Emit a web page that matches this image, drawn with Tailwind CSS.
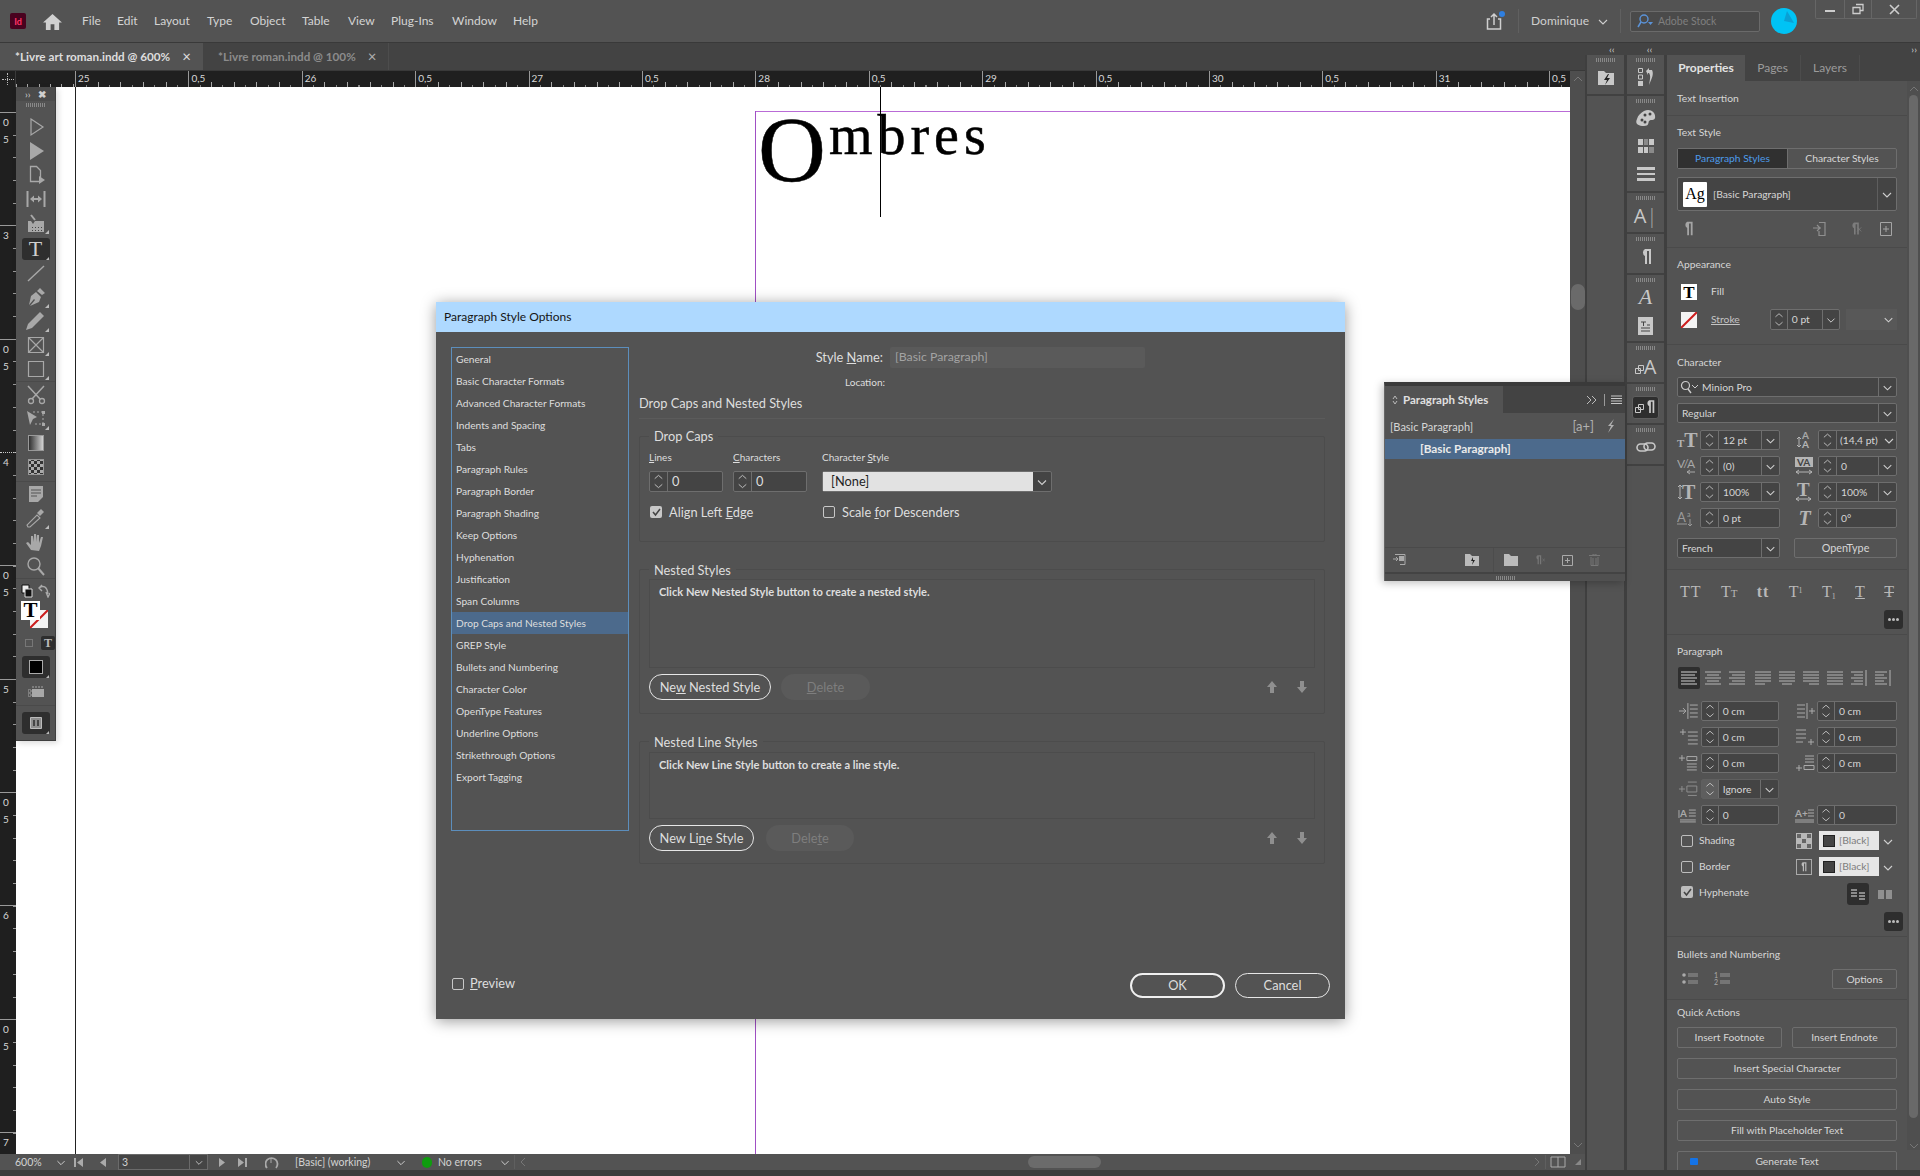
<!doctype html>
<html lang="en"><head><meta charset="utf-8"><title>InDesign</title>
<script src="https://cdn.jsdelivr.net/npm/@tailwindcss/browser@4"></script></head>
<body class="m-0 bg-[#535353]">
<svg class="absolute w-0 h-0"><defs>
<linearGradient id="gr"><stop offset="0" stop-color="#2a2a2a"/><stop offset="1" stop-color="#d8d8d8"/></linearGradient>
<pattern id="ck" width="6" height="6" patternUnits="userSpaceOnUse"><rect width="6" height="6" fill="#aaa"/><rect width="3" height="3" fill="#333"/><rect x="3" y="3" width="3" height="3" fill="#333"/></pattern>
<g id="fly"><path d="M27 23h-4l4-4z" fill="#bbb"/></g>
<g id="t-sel"><path d="M9 4L21 12 9 20Z" fill="none" stroke="currentColor" stroke-width="1.2"/></g>
<g id="t-dir"><path d="M8 3L22 12 8 21Z" fill="currentColor"/></g>
<g id="t-page"><path d="M8.500 3.500h6l4 4v11h-10z" fill="none" stroke="currentColor" stroke-width="1.300"/><path d="M17 13l6 4-6 4z" fill="currentColor"/></g>
<g id="t-gap"><path d="M5.500 4v16M22.500 4v16" stroke="currentColor" stroke-width="2"/><path d="M8 12l4-3.500v2.500h4V8.500l4 3.500-4 3.500V13h-4v2.500z" fill="currentColor"/></g>
<g id="t-col"><path d="M6 10h3l2 3 2-3h9v11H6z" fill="currentColor"/><path d="M9 4l4 5" stroke="currentColor" stroke-width="2"/><path d="M10 16h1v1h-1zm3 0h1v1h-1zm3 0h1v1h-1zm-6 3h1v1h-1zm3 0h1v1h-1zm3 0h1v1h-1zm3-3h1v1h-1zm0 3h1v1h-1z" fill="#444"/></g>
<g id="t-line"><path d="M6 20L22 5" stroke="currentColor" stroke-width="1.400"/></g>
<g id="t-pen"><path d="M18 3l5 5-3 2-5-4zM14 7l5 5-2 5-9 4 5-6-1-1-5 6 2-9z" fill="currentColor"/></g>
<g id="t-pcl"><path d="M18 3l4 4-12 12-6 2 2-6z" fill="currentColor"/></g>
<g id="t-frm"><path d="M6.500 4.500h15v15h-15zM6.500 4.500l15 15M21.500 4.500l-15 15" fill="none" stroke="currentColor" stroke-width="1.200"/></g>
<g id="t-rct"><path d="M6.500 4.500h15v15h-15z" fill="none" stroke="currentColor" stroke-width="1.200"/></g>
<g id="t-sci"><circle cx="9" cy="19" r="2.500" fill="none" stroke="currentColor" stroke-width="1.300"/><circle cx="20" cy="19" r="2.500" fill="none" stroke="currentColor" stroke-width="1.300"/><path d="M6 4l12 13M22 4L10 17" stroke="currentColor" stroke-width="1.500"/></g>
<g id="t-fre"><path d="M5 4l10 6-4 2-3 6z" fill="currentColor"/><path d="M11 5h10v12H13" fill="none" stroke="currentColor" stroke-dasharray="2 2"/><path d="M20 4h3v3h-3zM20 16h3v3h-3z" fill="currentColor"/></g>
<g id="t-gra"><rect x="6.500" y="4.500" width="15" height="15" fill="url(#gr)" stroke="#999"/></g>
<g id="t-fea"><rect x="6.500" y="4.500" width="15" height="15" fill="url(#ck)" stroke="#999"/></g>
<g id="t-not"><path d="M7 4h14v11l-5 5H7z" fill="currentColor"/><path d="M9 8h10M9 11h10M9 14h6" stroke="#555" stroke-width="1.200"/></g>
<g id="t-eye"><path d="M6 21l-1-2 10-10 3 3L8 21z" fill="none" stroke="currentColor" stroke-width="1.100"/><path d="M15 7l4-4 3 3-4 4z" fill="currentColor"/></g>
<g id="t-hnd"><path d="M9 20l-5-7 2-1 3 3V6l2 0 1 6V4h2l1 8V5h2l0 8 2-6h2l-2 9-2 5z" fill="currentColor"/></g>
<g id="t-zom"><circle cx="12" cy="10" r="6" fill="none" stroke="currentColor" stroke-width="1.400"/><path d="M16 14l6 7" stroke="currentColor" stroke-width="2"/></g>
<path id="spin" d="M5 7l4-3.500L13 7M5 13l4 3.500 4-3.500" fill="none" stroke="#c4c4c4"/>
<path id="chev" d="M5 8l4 4 4-4" fill="none" stroke="#cfcfcf" stroke-width="1.100"/>
<g id="up"><path d="M6 1L1 7h3v6h4V7h3z" fill="#8f8f8f"/></g>
<g id="down"><path d="M6 13L1 7h3V1h4v6h3z" fill="#8f8f8f"/></g>
<g id="pil"><path d="M8 2h8v15h-2V4h-2v13h-2V9a4 4 0 010-7z" fill="currentColor"/></g>
</defs></svg>

<div class="relative w-[1920px] h-[1176px] overflow-hidden flex flex-col bg-[#535353] text-[#d6d6d6] text-[11px] leading-none font-[Lato,sans-serif]">

<!-- top bar -->
<header class="h-[43px] shrink-0 flex items-center bg-[#535353] border-b border-[#393939]">
  <div class="ml-[10px] w-[16px] h-[16px] rounded-[2px] bg-[#49021f] text-[#ff3366] text-[9px] font-bold flex items-center justify-center">Id</div>
  <svg class="ml-[17px] w-[19px] h-[17px] text-[#d0d0d0]" viewBox="0 0 20 18"><path d="M10 1l10 9h-3v8h-5v-6H8v6H3v-8H0z" fill="currentColor"/></svg>
  <nav class="ml-[20px] flex text-[12px] text-[#d4d4d4]">
    <span class="w-[35px]">File</span><span class="w-[37px]">Edit</span><span class="w-[53px]">Layout</span><span class="w-[43px]">Type</span><span class="w-[52px]">Object</span><span class="w-[46px]">Table</span><span class="w-[43px]">View</span><span class="w-[61px]">Plug-Ins</span><span class="w-[61px]">Window</span><span>Help</span>
  </nav>
  <div class="ml-auto flex items-center h-full relative">
    <svg class="w-[20px] h-[20px] text-[#cfcfcf]" viewBox="0 0 20 20"><path d="M5 8H2.500v10h13V8H13M9 14V3M6 6l3-3 3 3" fill="none" stroke="currentColor" stroke-width="1.500"/><circle cx="17" cy="3" r="3" fill="#2f7fe0"/></svg>
    <span class="ml-[13px] w-px h-[24px] bg-[#606060]"></span>
    <span class="ml-[12px] text-[12px] text-[#cfcfcf]">Dominique</span>
    <svg class="ml-[5px] w-[18px] h-[18px]" viewBox="0 0 18 18"><use href="#chev"/></svg>
    <span class="ml-[8px] w-px h-[24px] bg-[#606060]"></span>
    <div class="ml-[9px] w-[130px] h-[21px] border border-[#6a6a6a] rounded-[2px] bg-[#4a4a4a] flex items-center pl-[5px] text-[#7f7f7f] text-[10.500px]">
      <svg class="w-[18px] h-[14px] mr-[4px]" viewBox="0 0 18 14"><circle cx="8" cy="5" r="4" fill="none" stroke="#5b93d8" stroke-width="1.400"/><path d="M5 8l-3 5" stroke="#5b93d8" stroke-width="1.500"/><path d="M12 8h5l-2.500 3z" fill="#5b93d8"/></svg>Adobe Stock
    </div>
    <svg class="ml-[11px] w-[26px] h-[26px]" viewBox="0 0 26 26"><circle cx="13" cy="13" r="13" fill="#00c3f5"/><path d="M13 13l3-10 7 12z" fill="#0aa0d4"/></svg>
    <div class="ml-[18px] mr-[3px] self-start w-[102px] h-[19px] border border-t-0 border-[#666] rounded-b-[2px] flex items-center text-[#cdcdcd]">
      <span class="w-[28px] flex justify-center"><span class="block w-[10px] h-[2px] mt-[4px] bg-[#cdcdcd]"></span></span>
      <span class="w-[28px] h-full border-x border-[#666] flex justify-center items-center"><svg class="w-[12px] h-[12px]" viewBox="0 0 12 12"><path d="M4 1.500h7v6H8.500M1 4.500h7v6H1z" fill="none" stroke="currentColor" stroke-width="1.300"/></svg></span>
      <span class="flex-1 flex justify-center"><svg class="w-[11px] h-[11px]" viewBox="0 0 11 11"><path d="M1 1l9 9M10 1l-9 9" stroke="currentColor" stroke-width="1.600"/></svg></span>
    </div>
  </div>
</header>

<div class="h-[1127px] flex shrink-0">
  <!-- left document region -->
  <div class="w-[1585px] shrink-0 flex flex-col">
    <div class="h-[28px] shrink-0 flex bg-[#434343] border-b border-[#393939]">
      <div class="w-[203px] bg-[#535353] flex items-center pl-[15px] font-bold text-[#dedede] text-[11.700px] whitespace-nowrap">*Livre art roman.indd @ 600%<span class="ml-[12px] text-[15px] font-normal">×</span></div>
      <div class="w-[186px] border-r border-[#4d4d4d] flex items-center pl-[15px] font-bold text-[#8c8c8c] text-[11.700px] whitespace-nowrap">*Livre roman.indd @ 100%<span class="ml-[12px] text-[15px] font-normal text-[#b0b0b0]">×</span></div>
    </div>
    <div class="flex-1 flex min-h-0">
      <div class="w-[1570px] flex flex-col">
        <!-- horizontal ruler -->
        <div class="h-[16px] shrink-0 flex bg-[#1f1f1f] text-[#d8d8d8] text-[10px]">
          <div class="w-[16px] border-r border-[#3a3a3a] relative flex items-center justify-center"><span class="block w-[12px] border-t border-dotted border-[#bbb]"></span><span class="absolute left-[7px] top-[2px] h-[12px] border-l border-dotted border-[#bbb]"></span></div>
          <div class="w-[59px] [background:repeating-linear-gradient(90deg,#aaa_0_1px,transparent_1px_11.340px)_bottom/100%_3px_no-repeat]"></div>
          <div class="flex-1 flex overflow-hidden [background:repeating-linear-gradient(90deg,#aaa_0_1px,transparent_1px_22.680px)_bottom/100%_5px_no-repeat,repeating-linear-gradient(90deg,#888_0_1px,transparent_1px_11.340px)_bottom/100%_2px_no-repeat]">
            <span class="w-[113.400px] shrink-0 border-l border-[#999] pl-[2px] pt-[2px]">25</span><span class="w-[113.400px] shrink-0 border-l border-[#999] pl-[2px] pt-[2px]">0,5</span><span class="w-[113.400px] shrink-0 border-l border-[#999] pl-[2px] pt-[2px]">26</span><span class="w-[113.400px] shrink-0 border-l border-[#999] pl-[2px] pt-[2px]">0,5</span><span class="w-[113.400px] shrink-0 border-l border-[#999] pl-[2px] pt-[2px]">27</span><span class="w-[113.400px] shrink-0 border-l border-[#999] pl-[2px] pt-[2px]">0,5</span><span class="w-[113.400px] shrink-0 border-l border-[#999] pl-[2px] pt-[2px]">28</span><span class="w-[113.400px] shrink-0 border-l border-[#999] pl-[2px] pt-[2px]">0,5</span><span class="w-[113.400px] shrink-0 border-l border-[#999] pl-[2px] pt-[2px]">29</span><span class="w-[113.400px] shrink-0 border-l border-[#999] pl-[2px] pt-[2px]">0,5</span><span class="w-[113.400px] shrink-0 border-l border-[#999] pl-[2px] pt-[2px]">30</span><span class="w-[113.400px] shrink-0 border-l border-[#999] pl-[2px] pt-[2px]">0,5</span><span class="w-[113.400px] shrink-0 border-l border-[#999] pl-[2px] pt-[2px]">31</span><span class="w-[113.400px] shrink-0 border-l border-[#999] pl-[2px] pt-[2px]">0,5</span>
          </div>
        </div>
        <div class="flex-1 flex min-h-0">
          <!-- vertical ruler -->
          <div class="w-[16px] shrink-0 bg-[#1f1f1f] text-[#d8d8d8] text-[10px] flex flex-col pt-[25px] overflow-hidden [background:repeating-linear-gradient(180deg,#999_0_1px,transparent_1px_22.680px)_right_top_25px/3px_100%_no-repeat,#1f1f1f]">
            <span class="h-[113.330px] shrink-0 border-t border-[#999] pl-[3px] pt-[1px] leading-[17px]">0<br>5</span><span class="h-[113.330px] shrink-0 border-t border-[#999] pl-[3px] pt-[1px] leading-[17px]">3</span><span class="h-[113.330px] shrink-0 border-t border-[#999] pl-[3px] pt-[1px] leading-[17px]">0<br>5</span><span class="h-[113.330px] shrink-0 border-t border-dotted border-[#ccc] pl-[3px] pt-[1px] leading-[17px]">4</span><span class="h-[113.330px] shrink-0 border-t border-[#999] pl-[3px] pt-[1px] leading-[17px]">0<br>5</span><span class="h-[113.330px] shrink-0 border-t border-[#999] pl-[3px] pt-[1px] leading-[17px]">5</span><span class="h-[113.330px] shrink-0 border-t border-[#999] pl-[3px] pt-[1px] leading-[17px]">0<br>5</span><span class="h-[113.330px] shrink-0 border-t border-[#999] pl-[3px] pt-[1px] leading-[17px]">6</span><span class="h-[113.330px] shrink-0 border-t border-[#999] pl-[3px] pt-[1px] leading-[17px]">0<br>5</span><span class="h-[113.330px] shrink-0 border-t border-[#999] pl-[3px] pt-[1px] leading-[17px]">7</span>
          </div>
          <!-- canvas -->
          <div class="relative flex-1 bg-white overflow-hidden">
            <div class="absolute left-[59px] top-0 bottom-0 w-px bg-[#222]"></div>
            <div class="absolute left-[739px] top-[24px] right-0 h-px bg-[#b96bd6]"></div>
            <div class="absolute left-[739px] top-[24px] bottom-0 w-px bg-[#a04fc4]"></div>
            <div class="absolute left-[742px] top-[15px] font-['Liberation_Serif'] text-black whitespace-nowrap leading-none flex items-baseline [-webkit-text-stroke:0.5px_black]">
              <span class="text-[94px]">O</span><span class="text-[56px] tracking-[5px] ml-[3px] relative top-[-27px]">mbres</span>
            </div>
            <div class="absolute left-[864px] top-0 h-[130px] w-px bg-black"></div>
          </div>
        </div>
      </div>
      <!-- doc scrollbar -->
      <div class="w-[15px] bg-[#4e4e4e] flex flex-col items-center relative">
        <svg class="mt-[3px] w-[12px] h-[10px]" viewBox="0 0 12 10"><path d="M2 7l4-4 4 4" fill="none" stroke="#777"/></svg>
        <div class="mt-[200px] w-[14px] h-[26px] rounded-full bg-[#6a6a6a]"></div>
        <svg class="mt-auto mb-[4px] w-[12px] h-[10px]" viewBox="0 0 12 10"><path d="M2 3l4 4 4-4" fill="none" stroke="#777"/></svg>
      </div>
    </div>
    <!-- status bar -->
    <div class="h-[16px] shrink-0 flex items-center bg-[#535353] text-[#d2d2d2] text-[10.500px] relative">
      <span class="ml-[15px] w-[37px]">600%</span>
      <svg class="w-[18px] h-[16px]" viewBox="0 0 18 18"><use href="#chev"/></svg>
      <svg class="ml-[3px] w-[11px] h-[11px]" viewBox="0 0 11 11"><path d="M1 1h2v9H1zM10 1v9L4 5.500z" fill="#aaa"/></svg>
      <svg class="ml-[14px] w-[11px] h-[11px]" viewBox="0 0 11 11"><path d="M8 1v9L2 5.500z" fill="#aaa"/></svg>
      <div class="ml-[9px] w-[90px] h-[16px] border border-[#6a6a6a] bg-[#454545] flex items-center pl-[3px]">3<span class="ml-auto w-[18px] h-full border-l border-[#6a6a6a] flex items-center justify-center"><svg class="w-[14px] h-[14px]" viewBox="0 0 18 18"><use href="#chev"/></svg></span></div>
      <svg class="ml-[8px] w-[11px] h-[11px]" viewBox="0 0 11 11"><path d="M3 1v9l6-4.500z" fill="#aaa"/></svg>
      <svg class="ml-[10px] w-[11px] h-[11px]" viewBox="0 0 11 11"><path d="M1 1v9l6-4.500zM8 1h2v9H8z" fill="#aaa"/></svg>
      <svg class="ml-[17px] w-[15px] h-[13px]" viewBox="0 0 15 13"><path d="M2 12a6 6 0 1 1 9 0" fill="none" stroke="#aaa" stroke-width="1.800"/><path d="M6 2v5" stroke="#aaa"/></svg>
      <span class="ml-[15px] w-[97px]">[Basic] (working)</span>
      <svg class="w-[18px] h-[16px]" viewBox="0 0 18 18"><use href="#chev"/></svg>
      <span class="ml-[12px] w-[10px] h-[11px] rounded-full bg-[#0f9d0f]"></span>
      <span class="ml-[6px] w-[58px]">No errors</span>
      <svg class="w-[18px] h-[16px]" viewBox="0 0 18 18"><use href="#chev"/></svg>
      <span class="w-px h-[14px] bg-[#5f5f5f]"></span>
      <svg class="ml-[4px] w-[8px] h-[10px]" viewBox="0 0 8 10"><path d="M6 1L2 5l4 4" fill="none" stroke="#777"/></svg>
      <div class="ml-[501px] w-[73px] h-[12px] rounded-full bg-[#6b6b6b]"></div>
      <svg class="ml-[432px] w-[8px] h-[10px]" viewBox="0 0 8 10"><path d="M2 1l4 4-4 4" fill="none" stroke="#777"/></svg>
      <span class="ml-[4px] w-px h-[14px] bg-[#5f5f5f]"></span>
      <svg class="ml-[4px] w-[16px] h-[12px]" viewBox="0 0 16 12"><path d="M1 1h14v10H1zM8 1v10" fill="none" stroke="#aaa"/></svg>
      <svg class="ml-[8px] w-[8px] h-[8px]" viewBox="0 0 8 8"><path d="M7 1v6H1z" fill="#888"/></svg>
    </div>
  </div>

  <!-- right dock region -->
  <div class="flex-1 flex flex-col bg-[#3f3f3f] min-w-0">
    <div class="h-[12px] shrink-0 flex items-center bg-[#434343] text-[#cfcfcf] text-[10px]">
      <span class="ml-[24px]">‹‹</span><span class="ml-[32px]">‹‹</span><span class="ml-auto mr-[3px]">››</span>
    </div>
    <div class="flex-1 flex min-h-0">
      <!-- column A -->
      <div class="ml-[2px] w-[37px] bg-[#535353] flex flex-col">
        <div class="h-[41px] border-b-2 border-[#414141] flex flex-col items-center">
          <span class="mt-[3px] block w-[19px] h-[4px] bg-[repeating-linear-gradient(90deg,#888_0_1px,transparent_1px_2px)]"></span>
          <svg class="mt-[8px] w-[18px] h-[16px]" viewBox="0 0 18 16"><path d="M1 1h6l2 2h8v12H1z" fill="#c8c8c8"/><path d="M11 4l-4 6h3l-2 5 5-7h-3l2-4z" fill="#222"/></svg>
        </div>
      </div>
      <!-- column B -->
      <div class="ml-[3px] w-[37px] bg-[#535353] flex flex-col text-[#c8c8c8]">
        <div class="h-[41px] border-b-2 border-[#414141] flex flex-col items-center">
          <span class="mt-[3px] block w-[19px] h-[4px] bg-[repeating-linear-gradient(90deg,#888_0_1px,transparent_1px_2px)]"></span>
          <svg class="mt-[5px] w-[18px] h-[20px]" viewBox="0 0 18 20"><path d="M1.500 1.500h4v4h-4zM1.500 8h4v4h-4z" fill="none" stroke="currentColor"/><path d="M1 14h5v5H1z" fill="currentColor"/><path d="M9 4l3-3v2h3c2 4 0 8-3 15 1-6 2-9 0-12h-1v2z" fill="currentColor"/></svg>
        </div>
        <div class="h-[97px] border-b-2 border-[#414141] flex flex-col items-center">
          <span class="mt-[3px] block w-[19px] h-[4px] bg-[repeating-linear-gradient(90deg,#888_0_1px,transparent_1px_2px)]"></span>
          <svg class="mt-[6px] w-[20px] h-[18px]" viewBox="0 0 20 18"><path d="M8 2c7-3 12 2 11 7-1 3-4 1-6 3-1 2 0 5-5 5-7 0-9-3-7-7 1-4 4-6 7-8z" fill="currentColor"/><circle cx="6" cy="11" r="1.500" fill="#444"/><circle cx="9" cy="6" r="1.500" fill="#444"/><circle cx="14" cy="5" r="1.500" fill="#444"/><circle cx="9" cy="13" r="1.500" fill="#444"/></svg>
          <svg class="mt-[11px] w-[18px] h-[16px]" viewBox="0 0 18 16"><path d="M1 1h5v6H1zM7 1h4v6H7zM12 1h5v6h-5zM1 9h5v6H1zM7 9h4v6H7zM12 9h5v6h-5z" fill="#c8c8c8"/><path d="M7 1h4v6H7zM12 9h5v6h-5z" fill="#8a8a8a"/></svg>
          <svg class="mt-[12px] w-[18px] h-[16px]" viewBox="0 0 18 16"><path d="M0 1h18v3H0zM0 7h18v2H0zM0 12h18v3H0z" fill="currentColor"/></svg>
        </div>
        <div class="h-[41px] border-b-2 border-[#414141] flex flex-col items-center">
          <span class="mt-[3px] block w-[19px] h-[4px] bg-[repeating-linear-gradient(90deg,#888_0_1px,transparent_1px_2px)]"></span>
          <span class="mt-[6px] text-[20px] font-['Open_Sans']">A<span class="font-light text-[#aaa]">|</span></span>
        </div>
        <div class="h-[41px] border-b-2 border-[#414141] flex flex-col items-center">
          <span class="mt-[3px] block w-[19px] h-[4px] bg-[repeating-linear-gradient(90deg,#888_0_1px,transparent_1px_2px)]"></span>
          <svg class="mt-[5px] w-[22px] h-[22px]" viewBox="0 0 22 20"><use href="#pil"/></svg>
        </div>
        <div class="h-[68px] border-b-2 border-[#414141] flex flex-col items-center">
          <span class="mt-[3px] block w-[19px] h-[4px] bg-[repeating-linear-gradient(90deg,#888_0_1px,transparent_1px_2px)]"></span>
          <span class="mt-[4px] text-[22px] italic font-['Liberation_Serif']">A</span>
          <svg class="mt-[9px] w-[15px] h-[18px]" viewBox="0 0 15 18"><path d="M0 0h15v18H0z" fill="currentColor"/><path d="M3 5h5M5.500 5v4M3 11h9M3 14h9M9 8h3" stroke="#444"/></svg>
        </div>
        <div class="h-[41px] border-b-2 border-[#414141] flex flex-col items-center">
          <span class="mt-[3px] block w-[19px] h-[4px] bg-[repeating-linear-gradient(90deg,#888_0_1px,transparent_1px_2px)]"></span>
          <div class="mt-[7px] flex items-end"><svg class="w-[9px] h-[11px] mb-[1px]" viewBox="0 0 9 11"><path d="M.500 3.500h5v5h-5zM3.500.500h5v5h-5z" fill="none" stroke="#c8c8c8"/></svg><span class="text-[20px] font-['Open_Sans']">A</span></div>
        </div>
        <div class="h-[41px] border-b-2 border-[#414141] flex items-center justify-center relative">
          <span class="absolute top-[3px] block w-[19px] h-[4px] bg-[repeating-linear-gradient(90deg,#888_0_1px,transparent_1px_2px)]"></span>
          <div class="mt-[8px] w-[27px] h-[23px] rounded-[3px] bg-[#2e2e2e] border border-[#5e5e5e] flex items-end justify-center pb-[2px]"><svg class="w-[9px] h-[11px] mb-[1px]" viewBox="0 0 9 11"><path d="M.500 3.500h5v5h-5zM3.500.500h5v5h-5z" fill="none" stroke="#c8c8c8"/></svg><svg class="w-[12px] h-[18px]" viewBox="4 0 14 20"><use href="#pil"/></svg></div>
        </div>
        <div class="h-[41px] border-b-2 border-[#414141] flex flex-col items-center">
          <span class="mt-[3px] block w-[19px] h-[4px] bg-[repeating-linear-gradient(90deg,#888_0_1px,transparent_1px_2px)]"></span>
          <svg class="mt-[9px] w-[20px] h-[12px]" viewBox="0 0 20 12"><rect x="1" y="3" width="11" height="7" rx="3.500" fill="none" stroke="#c8c8c8" stroke-width="1.600"/><rect x="8" y="2" width="11" height="7" rx="3.500" fill="none" stroke="#c8c8c8" stroke-width="1.600"/></svg>
        </div>
      </div>
      <!-- properties -->
      <aside class="ml-[3px] w-[253px] bg-[#535353] flex flex-col overflow-hidden text-[10.300px]">
        <div class="h-[26px] shrink-0 flex bg-[#434343] text-[12px] text-[#9b9b9b]">
          <span class="w-[78px] bg-[#535353] text-[#e2e2e2] font-bold flex items-center justify-center">Properties</span>
          <span class="w-[56px] border-r border-[#4c4c4c] flex items-center justify-center">Pages</span>
          <span class="w-[59px] border-r border-[#4c4c4c] flex items-center justify-center">Layers</span>
        </div>
        <div class="flex-1 flex min-h-0">
          <div class="w-[240px] shrink-0 flex flex-col">
            <section class="h-[35px] shrink-0 border-b border-[#4a4a4a] pl-[10px] flex items-center">Text Insertion</section>
            <section class="h-[132px] shrink-0 border-b border-[#4a4a4a] px-[10px] pt-[8px]">
              <div class="h-[16px] flex items-center">Text Style</div>
              <div class="mt-[8px] h-[21px] flex border border-[#6e6e6e] rounded-[2px]">
                <span class="w-[109px] bg-[#303030] text-[#4d9be8] flex items-center justify-center">Paragraph Styles</span>
                <span class="flex-1 border-l border-[#6e6e6e] flex items-center justify-center">Character Styles</span>
              </div>
              <div class="mt-[8px] h-[34px] flex items-center border border-[#6e6e6e] rounded-[2px] bg-[#444]">
                <span class="ml-[5px] w-[24px] h-[25px] bg-white rounded-[1px] text-black text-[16px] font-['Liberation_Serif'] flex items-center justify-center">Ag</span>
                <span class="ml-[6px]">[Basic Paragraph]</span>
                <span class="ml-auto w-[19px] h-full border-l border-[#5e5e5e] flex items-center justify-center"><svg class="w-[18px] h-[18px]" viewBox="0 0 18 18"><use href="#chev"/></svg></span>
              </div>
              <div class="mt-[9px] h-[18px] flex items-center text-[#a5a5a5]">
                <svg class="ml-[3px] w-[18px] h-[18px]" viewBox="2 0 20 20"><use href="#pil"/></svg>
                <svg class="ml-auto w-[18px] h-[16px]" viewBox="0 0 18 16"><path d="M7 1.500h6v13H7V10M1 7h8M5 4l3 3-3 3" fill="none" stroke="#8f8f8f" stroke-width="1.200"/></svg>
                <svg class="ml-[16px] w-[16px] h-[16px]" viewBox="0 0 20 20"><use href="#pil" class="text-[#7d7d7d]"/><path d="M14 8l5 5M19 8l-5 5" stroke="#7d7d7d"/></svg>
                <svg class="ml-[18px] mr-[5px] w-[12px] h-[14px]" viewBox="0 0 12 14"><path d="M.500.500h11v13H.500zM3 7h6M6 4v6" fill="none" stroke="#a5a5a5"/></svg>
              </div>
            </section>
            <section class="h-[97px] shrink-0 border-b border-[#4a4a4a] px-[10px] pt-[8px]">
              <div class="h-[16px] flex items-center">Appearance</div>
              <div class="mt-[12px] h-[16px] flex items-center">
                <span class="ml-[4px] w-[16px] h-[16px] bg-white text-black text-[17px] font-bold font-['Liberation_Serif'] flex items-center justify-center">T</span><span class="ml-[14px] -translate-y-px">Fill</span>
              </div>
              <div class="mt-[9px] h-[21px] flex items-center">
                <span class="relative ml-[4px] w-[16px] h-[16px] bg-[#f4f4f4] overflow-hidden"><svg class="w-[16px] h-[16px]" viewBox="0 0 16 16"><path d="M0 16L16 0" stroke="#cc1d1d" stroke-width="2"/></svg></span>
                <span class="ml-[14px] underline text-[#c4c4c4]">Stroke</span>
                <div class="ml-[30px] w-[70px] h-[21px] flex border border-[#6e6e6e] rounded-[2px] bg-[#444]"><svg class="w-[17px] h-[19px] border-r border-[#6e6e6e]" viewBox="0 0 18 20"><use href="#spin"/></svg><span class="pl-[4px] flex-1 self-center">0 pt</span><svg class="w-[17px] h-[19px] border-l border-[#6e6e6e]" viewBox="0 0 18 18"><use href="#chev"/></svg></div>
                <div class="ml-[6px] flex-1 h-[21px] bg-[#585858] flex justify-end"><svg class="w-[17px] h-[20px]" viewBox="0 0 18 18"><use href="#chev"/></svg></div>
              </div>
            </section>
            <section class="h-[225px] shrink-0 border-b border-[#4a4a4a] px-[10px] pt-[9px]">
              <div class="h-[16px] flex items-center">Character</div>
              <div class="mt-[7px] h-[20px] flex items-center border border-[#6e6e6e] rounded-[2px] bg-[#444]">
                <svg class="ml-[2px] w-[20px] h-[14px]" viewBox="0 0 20 14"><circle cx="5.500" cy="5.500" r="4" fill="none" stroke="#ccc" stroke-width="1.200"/><path d="M8 9l3 4" stroke="#ccc" stroke-width="1.400"/><path d="M12 5l3 3 3-3" fill="none" stroke="#ccc"/></svg>
                <span class="ml-[2px]">Minion Pro</span>
                <span class="ml-auto w-[18px] h-full border-l border-[#6e6e6e] flex items-center"><svg class="w-[18px] h-[18px]" viewBox="0 0 18 18"><use href="#chev"/></svg></span>
              </div>
              <div class="mt-[6px] h-[20px] flex items-center border border-[#6e6e6e] rounded-[2px] bg-[#444] pl-[4px]">Regular
                <span class="ml-auto w-[18px] h-full border-l border-[#6e6e6e] flex items-center"><svg class="w-[18px] h-[18px]" viewBox="0 0 18 18"><use href="#chev"/></svg></span>
              </div>
              <div class="mt-[7px] grid grid-cols-[103px_102px] gap-x-[15px] gap-y-[6px]">
                <div class="h-[20px] flex items-center">
                  <span class="w-[23px] text-[20px] font-bold font-['Liberation_Serif'] text-[#b5b5b5]"><span class="text-[11px]">T</span>T</span>
                  <div class="w-[80px] h-[20px] flex border border-[#6e6e6e] rounded-[2px] bg-[#444]"><svg class="w-[18px] h-[18px] border-r border-[#6e6e6e]" viewBox="0 0 18 20"><use href="#spin"/></svg><span class="pl-[4px] flex-1 self-center">12 pt</span><svg class="w-[18px] h-[18px] border-l border-[#6e6e6e]" viewBox="0 0 18 18"><use href="#chev"/></svg></div>
                </div>
                <div class="h-[20px] flex items-center">
                  <svg class="w-[23px] h-[20px]" viewBox="0 0 23 20"><text x="7" y="9" font-size="10" font-weight="700" fill="#a8a8a8">A</text><text x="7" y="18" font-size="10" font-weight="700" fill="#b5b5b5">A</text><path d="M4 7v10M2 9l2-2 2 2M2 15l2 2 2-2" fill="none" stroke="#b5b5b5"/></svg>
                  <div class="w-[79px] h-[20px] flex border border-[#6e6e6e] rounded-[2px] bg-[#444]"><svg class="w-[18px] h-[18px] border-r border-[#6e6e6e]" viewBox="0 0 18 20"><use href="#spin"/></svg><span class="pl-[3px] flex-1 self-center whitespace-nowrap">(14,4 pt)</span><svg class="w-[14px] h-[18px]" viewBox="2 0 14 18"><use href="#chev"/></svg></div>
                </div>
                <div class="h-[20px] flex items-center">
                  <svg class="w-[23px] h-[20px]" viewBox="0 0 23 20"><text x="0" y="12" font-size="12" fill="#a8a8a8" letter-spacing="-1">V/A</text><path d="M10 16h8M13 14l-3 2 3 2" fill="none" stroke="#a8a8a8"/></svg>
                  <div class="w-[80px] h-[20px] flex border border-[#6e6e6e] rounded-[2px] bg-[#444]"><svg class="w-[18px] h-[18px] border-r border-[#6e6e6e]" viewBox="0 0 18 20"><use href="#spin"/></svg><span class="pl-[4px] flex-1 self-center">(0)</span><svg class="w-[18px] h-[18px] border-l border-[#6e6e6e]" viewBox="0 0 18 18"><use href="#chev"/></svg></div>
                </div>
                <div class="h-[20px] flex items-center">
                  <svg class="w-[23px] h-[20px]" viewBox="0 0 23 20"><path d="M0 1h18v10H0z" fill="#b5b5b5"/><text x="2" y="10" font-size="10" font-weight="700" fill="#444">VA</text><path d="M1 16h16M4 14l-3 2 3 2M14 14l3 2-3 2" fill="none" stroke="#b5b5b5"/></svg>
                  <div class="w-[79px] h-[20px] flex border border-[#6e6e6e] rounded-[2px] bg-[#444]"><svg class="w-[18px] h-[18px] border-r border-[#6e6e6e]" viewBox="0 0 18 20"><use href="#spin"/></svg><span class="pl-[4px] flex-1 self-center">0</span><svg class="w-[18px] h-[18px] border-l border-[#6e6e6e]" viewBox="0 0 18 18"><use href="#chev"/></svg></div>
                </div>
                <div class="h-[20px] flex items-center">
                  <svg class="w-[23px] h-[20px]" viewBox="0 0 23 20"><text x="5" y="17" font-size="20" font-weight="700" font-family="Liberation Serif" fill="#b5b5b5">T</text><path d="M3 3v14M1 5l2-2 2 2M1 15l2 2 2-2" fill="none" stroke="#b5b5b5"/></svg>
                  <div class="w-[80px] h-[20px] flex border border-[#6e6e6e] rounded-[2px] bg-[#444]"><svg class="w-[18px] h-[18px] border-r border-[#6e6e6e]" viewBox="0 0 18 20"><use href="#spin"/></svg><span class="pl-[4px] flex-1 self-center">100%</span><svg class="w-[18px] h-[18px] border-l border-[#6e6e6e]" viewBox="0 0 18 18"><use href="#chev"/></svg></div>
                </div>
                <div class="h-[20px] flex items-center">
                  <svg class="w-[23px] h-[20px]" viewBox="0 0 23 20"><text x="2" y="14" font-size="19" font-weight="700" font-family="Liberation Serif" fill="#b5b5b5">T</text><path d="M1 17h15M4 15l-3 2 3 2M13 15l3 2-3 2" fill="none" stroke="#b5b5b5"/></svg>
                  <div class="w-[79px] h-[20px] flex border border-[#6e6e6e] rounded-[2px] bg-[#444]"><svg class="w-[18px] h-[18px] border-r border-[#6e6e6e]" viewBox="0 0 18 20"><use href="#spin"/></svg><span class="pl-[4px] flex-1 self-center">100%</span><svg class="w-[18px] h-[18px] border-l border-[#6e6e6e]" viewBox="0 0 18 18"><use href="#chev"/></svg></div>
                </div>
                <div class="h-[20px] flex items-center">
                  <svg class="w-[23px] h-[20px]" viewBox="0 0 23 20"><text x="0" y="14" font-size="13" fill="#9a9a9a">A</text><text x="10" y="9" font-size="7" fill="#9a9a9a">a</text><path d="M0 16h10M13 11v7M11 16l2 2 2-2" fill="none" stroke="#9a9a9a"/></svg>
                  <div class="w-[80px] h-[20px] flex border border-[#6e6e6e] rounded-[2px] bg-[#444]"><svg class="w-[18px] h-[18px] border-r border-[#6e6e6e]" viewBox="0 0 18 20"><use href="#spin"/></svg><span class="pl-[4px] flex-1 self-center">0 pt</span></div>
                </div>
                <div class="h-[20px] flex items-center">
                  <span class="w-[23px] text-[20px] italic font-bold font-['Liberation_Serif'] text-[#b5b5b5] text-center pr-[4px]">T</span>
                  <div class="w-[79px] h-[20px] flex border border-[#6e6e6e] rounded-[2px] bg-[#444]"><svg class="w-[18px] h-[18px] border-r border-[#6e6e6e]" viewBox="0 0 18 20"><use href="#spin"/></svg><span class="pl-[4px] flex-1 self-center">0°</span></div>
                </div>
              </div>
              <div class="mt-[10px] flex h-[20px]">
                <div class="w-[103px] flex items-center border border-[#6e6e6e] rounded-[2px] bg-[#444] pl-[4px]">French<span class="ml-auto w-[18px] h-full border-l border-[#6e6e6e] flex items-center"><svg class="w-[18px] h-[18px]" viewBox="0 0 18 18"><use href="#chev"/></svg></span></div>
                <div class="ml-[14px] w-[103px] border border-[#6e6e6e] rounded-[2px] flex items-center justify-center text-[10.800px]">OpenType</div>
              </div>
            </section>
            <section class="h-[65px] shrink-0 border-b border-[#4a4a4a] px-[10px] pt-[13px]">
              <div class="h-[18px] flex items-center justify-between font-['Liberation_Serif'] text-[16px] text-[#b8b8b8] px-[3px]">
                <span class="tracking-[1px]">TT</span><span>T<span class="text-[11px]">T</span></span><span class="font-bold tracking-[1px]">tt</span><span>T<sup class="text-[8px]">1</sup></span><span>T<sub class="text-[8px]">1</sub></span><span class="underline">T</span><span class="line-through">T</span>
              </div>
              <div class="mt-[9px] ml-auto mr-[-6px] w-[19px] h-[19px] bg-[#2e2e2e] rounded-[3px] flex items-center justify-center gap-[1px]"><i class="size-[3px] rounded-full bg-[#bbb]"></i><i class="size-[3px] rounded-full bg-[#bbb]"></i><i class="size-[3px] rounded-full bg-[#bbb]"></i></div>
            </section>
            <section class="h-[302px] shrink-0 border-b border-[#4a4a4a] px-[10px] pt-[8px]">
              <div class="h-[16px] flex items-center">Paragraph</div>
              <div class="mt-[8px] h-[22px] flex items-center border-b-0 pr-[1px]">
                <span class="ml-[1px] w-[22px] h-[22px] bg-[#2e2e2e] rounded-[2px] flex items-center justify-center"><svg class="w-[16px] h-[14px]" viewBox="0 0 16 14"><path d="M0 1h16M0 4h14M0 7h16M0 10h14M0 13h16" stroke="#d0d0d0"/></svg></span>
                <svg class="ml-[1px] w-[24px] h-[14px]" viewBox="-4 0 24 14"><path d="M0 1h16M2 4h12M0 7h16M2 10h12M0 13h16" stroke="#b5b5b5"/></svg>
                <svg class="w-[23px] h-[14px]" viewBox="-4 0 23 14"><path d="M0 1h16M3 4h13M0 7h16M3 10h13M0 13h16" stroke="#b5b5b5"/></svg>
                <svg class="ml-[3px] w-[24px] h-[14px]" viewBox="-4 0 24 14"><path d="M0 1h16M0 4h16M0 7h16M0 10h16M0 13h10" stroke="#b5b5b5"/></svg>
                <svg class="w-[24px] h-[14px]" viewBox="-4 0 24 14"><path d="M0 1h16M0 4h16M0 7h16M0 10h16M3 13h10" stroke="#b5b5b5"/></svg>
                <svg class="w-[24px] h-[14px]" viewBox="-4 0 24 14"><path d="M0 1h16M0 4h16M0 7h16M0 10h16M6 13h10" stroke="#b5b5b5"/></svg>
                <svg class="w-[24px] h-[14px]" viewBox="-4 0 24 14"><path d="M0 1h16M0 4h16M0 7h16M0 10h16M0 13h16" stroke="#b5b5b5"/></svg>
                <svg class="w-[24px] h-[16px]" viewBox="-4 0 24 16"><path d="M0 2h12M3 5h9M0 8h12M3 11h9M0 14h12M15 0v16" stroke="#b5b5b5"/></svg>
                <svg class="w-[24px] h-[16px]" viewBox="-4 0 24 16"><path d="M0 2h12M0 5h9M0 8h12M0 11h9M0 14h12M15 0v16" stroke="#b5b5b5"/></svg>
              </div>
              <div class="mt-[12px] grid grid-cols-[102px_103px] gap-x-[15px] gap-y-[6px]">
                <div class="h-[20px] flex items-center"><svg class="w-[24px] h-[16px]" viewBox="0 0 24 16"><path d="M2 8h7M6 5l3 3-3 3M11 0v16M13 2h8M13 6h8M13 10h8M13 14h8" stroke="#aaa" fill="none"/></svg><div class="w-[79px] h-[20px] flex border border-[#6e6e6e] rounded-[2px] bg-[#444]"><svg class="w-[17px] h-[18px] border-r border-[#6e6e6e]" viewBox="0 0 18 20"><use href="#spin"/></svg><span class="pl-[4px] flex-1 self-center">0 cm</span></div></div>
                <div class="h-[20px] flex items-center"><svg class="w-[23px] h-[16px]" viewBox="0 0 23 16"><path d="M3 2h8M3 6h8M3 10h8M3 14h8M13 0v16M15 8h6M18 5v6" stroke="#aaa" fill="none"/></svg><div class="w-[80px] h-[20px] flex border border-[#6e6e6e] rounded-[2px] bg-[#444]"><svg class="w-[17px] h-[18px] border-r border-[#6e6e6e]" viewBox="0 0 18 20"><use href="#spin"/></svg><span class="pl-[4px] flex-1 self-center">0 cm</span></div></div>
                <div class="h-[20px] flex items-center"><svg class="w-[24px] h-[16px]" viewBox="0 0 24 16"><path d="M3 3h6M6 0v6M11 3h10M11 7h10M11 11h10M11 15h10" stroke="#aaa" fill="none"/></svg><div class="w-[79px] h-[20px] flex border border-[#6e6e6e] rounded-[2px] bg-[#444]"><svg class="w-[17px] h-[18px] border-r border-[#6e6e6e]" viewBox="0 0 18 20"><use href="#spin"/></svg><span class="pl-[4px] flex-1 self-center">0 cm</span></div></div>
                <div class="h-[20px] flex items-center"><svg class="w-[23px] h-[16px]" viewBox="0 0 23 16"><path d="M2 1h10M2 5h10M2 9h10M2 13h7M14 13h6M17 10v6" stroke="#aaa" fill="none"/></svg><div class="w-[80px] h-[20px] flex border border-[#6e6e6e] rounded-[2px] bg-[#444]"><svg class="w-[17px] h-[18px] border-r border-[#6e6e6e]" viewBox="0 0 18 20"><use href="#spin"/></svg><span class="pl-[4px] flex-1 self-center">0 cm</span></div></div>
                <div class="h-[20px] flex items-center"><svg class="w-[24px] h-[16px]" viewBox="0 0 24 16"><path d="M2 3h6M5 0v6M10 1.500h10v4H10zM10 9h10M10 12h10M10 15h10" stroke="#aaa" fill="none"/></svg><div class="w-[79px] h-[20px] flex border border-[#6e6e6e] rounded-[2px] bg-[#444]"><svg class="w-[17px] h-[18px] border-r border-[#6e6e6e]" viewBox="0 0 18 20"><use href="#spin"/></svg><span class="pl-[4px] flex-1 self-center">0 cm</span></div></div>
                <div class="h-[20px] flex items-center"><svg class="w-[23px] h-[16px]" viewBox="0 0 23 16"><path d="M2 13h6M5 10v6M11 1h9M11 4h9M11 7h9M10 10.500h10v4H10z" stroke="#aaa" fill="none"/></svg><div class="w-[80px] h-[20px] flex border border-[#6e6e6e] rounded-[2px] bg-[#444]"><svg class="w-[17px] h-[18px] border-r border-[#6e6e6e]" viewBox="0 0 18 20"><use href="#spin"/></svg><span class="pl-[4px] flex-1 self-center">0 cm</span></div></div>
                <div class="h-[20px] flex items-center"><svg class="w-[24px] h-[16px]" viewBox="0 0 24 16"><path d="M2 8h6M5 5v6M11 1h9M11 14.500h9M10 5h10v6H10z" stroke="#8e8e8e" fill="none"/></svg><div class="w-[79px] h-[20px] flex border border-[#5f5f5f] rounded-[2px] bg-[#444]"><svg class="w-[17px] h-[18px] border-r border-[#6e6e6e] bg-[#5e5e5e]" viewBox="0 0 18 20"><use href="#spin"/></svg><span class="pl-[4px] flex-1 self-center">Ignore</span><svg class="w-[18px] h-[18px] border-l border-[#6e6e6e]" viewBox="0 0 18 18"><use href="#chev"/></svg></div></div>
                <div></div>
                <div class="h-[20px] flex items-center"><svg class="w-[23px] h-[16px]" viewBox="0 0 23 16"><text x="3" y="10" font-size="10" font-weight="700" fill="#aaa">A</text><path d="M2 3v8M12 3h7M12 6h7M12 9h7M3 13h16M3 15h16" stroke="#aaa" fill="none"/></svg><div class="w-[79px] ml-[1px] h-[20px] flex border border-[#6e6e6e] rounded-[2px] bg-[#444]"><svg class="w-[17px] h-[18px] border-r border-[#6e6e6e]" viewBox="0 0 18 20"><use href="#spin"/></svg><span class="pl-[4px] flex-1 self-center">0</span></div></div>
                <div class="h-[20px] flex items-center"><svg class="w-[23px] h-[16px]" viewBox="0 0 23 16"><text x="1" y="10" font-size="10" font-weight="700" fill="#aaa">A+</text><path d="M14 3h6M14 6h6M14 9h6M1 13h19M1 15h19" stroke="#aaa" fill="none"/></svg><div class="w-[80px] h-[20px] flex border border-[#6e6e6e] rounded-[2px] bg-[#444]"><svg class="w-[17px] h-[18px] border-r border-[#6e6e6e]" viewBox="0 0 18 20"><use href="#spin"/></svg><span class="pl-[4px] flex-1 self-center">0</span></div></div>
              </div>
              <div class="mt-[6px] h-[19px] flex items-center">
                <span class="ml-[4px] w-[12px] h-[12px] border border-[#bdbdbd] rounded-[2px]"></span><span class="ml-[6px]">Shading</span>
                <svg class="ml-auto w-[16px] h-[16px]" viewBox="0 0 16 16"><path d="M0 0h16v16H0z" fill="#b8b8b8"/><path d="M1 1h4v4H1zM6 6h4v4H6zM11 1h4v4h-4zM1 11h4v4H1zM11 11h4v4h-4z" fill="#666"/></svg>
                <div class="ml-[7px] w-[60px] h-[19px] bg-[#e6e6e6] flex items-center pl-[4px] text-[#7d7d7d]"><span class="w-[12px] h-[12px] bg-[#444] border border-[#222] mr-[4px]"></span>[Black]</div>
                <svg class="w-[18px] h-[18px]" viewBox="0 0 18 18"><use href="#chev"/></svg>
              </div>
              <div class="mt-[7px] h-[19px] flex items-center">
                <span class="ml-[4px] w-[12px] h-[12px] border border-[#bdbdbd] rounded-[2px]"></span><span class="ml-[6px]">Border</span>
                <span class="ml-auto w-[16px] h-[16px] border border-[#aaa] flex items-center justify-center"><svg class="w-[10px] h-[12px]" viewBox="6 0 12 20"><use href="#pil" class="text-[#bbb]"/></svg></span>
                <div class="ml-[7px] w-[60px] h-[19px] bg-[#e6e6e6] flex items-center pl-[4px] text-[#7d7d7d]"><span class="w-[12px] h-[12px] bg-[#444] border border-[#222] mr-[4px]"></span>[Black]</div>
                <svg class="w-[18px] h-[18px]" viewBox="0 0 18 18"><use href="#chev"/></svg>
              </div>
              <div class="mt-[7px] h-[22px] flex items-center">
                <span class="mb-[4px] ml-[4px] w-[12px] h-[12px] bg-[#bdbdbd] rounded-[2px] flex items-center justify-center"><svg class="w-[9px] h-[9px]" viewBox="0 0 9 9"><path d="M1 4l2.500 3L8 1" fill="none" stroke="#444" stroke-width="1.500"/></svg></span><span class="mb-[4px] ml-[6px]">Hyphenate</span>
                <span class="ml-auto w-[22px] h-[22px] rounded-[3px] bg-[#2e2e2e] flex items-center justify-center"><svg class="w-[14px] h-[11px]" viewBox="0 0 14 11"><path d="M0 1h6M0 4h6M0 7h6M8 4h6M8 7h6M8 10h6" stroke="#aaa" stroke-width="1.500"/></svg></span>
                <span class="ml-[9px] mr-[5px] w-[14px] h-[9px] flex gap-[2px]"><i class="flex-1 bg-[#909090]"></i><i class="flex-1 bg-[#909090]"></i></span>
              </div>
              <div class="mt-[7px] ml-auto mr-[-6px] w-[19px] h-[19px] bg-[#2e2e2e] rounded-[3px] flex items-center justify-center gap-[1px]"><i class="size-[3px] rounded-full bg-[#bbb]"></i><i class="size-[3px] rounded-full bg-[#bbb]"></i><i class="size-[3px] rounded-full bg-[#bbb]"></i></div>
            </section>
            <section class="h-[63px] shrink-0 border-b border-[#4a4a4a] px-[10px] pt-[9px]">
              <div class="h-[16px] flex items-center">Bullets and Numbering</div>
              <div class="mt-[7px] h-[20px] flex items-center">
                <svg class="ml-[5px] w-[16px] h-[14px]" viewBox="0 0 16 14"><circle cx="2" cy="3" r="1.800" fill="#aaa"/><circle cx="2" cy="10" r="1.800" fill="#aaa"/><path d="M6 2h10M6 4h10M6 9h10M6 11h10" stroke="#aaa" stroke-width=".8"/></svg>
                <svg class="ml-[16px] w-[16px] h-[14px]" viewBox="0 0 16 14"><path d="M6 2h10M6 4h10M6 9h10M6 11h10" stroke="#aaa" stroke-width=".8"/><text x="0" y="6" font-size="7" fill="#aaa">1</text><text x="0" y="13" font-size="7" fill="#aaa">2</text></svg>
                <div class="ml-auto w-[65px] h-[20px] border border-[#6e6e6e] rounded-[2px] flex items-center justify-center">Options</div>
              </div>
            </section>
            <section class="px-[10px] pt-[4px]">
              <div class="h-[16px] flex items-center">Quick Actions</div>
              <div class="mt-[7px] flex gap-[10px]"><div class="flex-1 h-[21px] border border-[#6e6e6e] rounded-[2px] flex items-center justify-center">Insert Footnote</div><div class="flex-1 h-[21px] border border-[#6e6e6e] rounded-[2px] flex items-center justify-center">Insert Endnote</div></div>
              <div class="mt-[10px] h-[21px] border border-[#6e6e6e] rounded-[2px] flex items-center justify-center">Insert Special Character</div>
              <div class="mt-[10px] h-[21px] border border-[#6e6e6e] rounded-[2px] flex items-center justify-center">Auto Style</div>
              <div class="mt-[10px] h-[21px] border border-[#6e6e6e] rounded-[2px] flex items-center justify-center">Fill with Placeholder Text</div>
              <div class="relative mt-[10px] h-[21px] border border-[#6e6e6e] rounded-[2px] flex items-center justify-center"><span class="absolute left-[12px] top-[6px] w-[8px] h-[7px] rounded-[1px] bg-[#1473e6]"></span>Generate Text</div>
            </section>
          </div>
          <!-- panel scrollbar -->
          <div class="flex-1 bg-[#4f4f4f] flex flex-col items-center pt-[4px] h-[1069px]">
            <svg class="w-[12px] h-[8px]" viewBox="0 0 12 8"><path d="M2 6l4-4 4 4" fill="none" stroke="#777"/></svg>
            <div class="mt-[2px] w-[9px] h-[1025px] rounded-full bg-[#696969]"></div>
            <svg class="mt-[24px] w-[12px] h-[8px]" viewBox="0 0 12 8"><path d="M2 2l4 4 4-4" fill="none" stroke="#777"/></svg>
          </div>
        </div>
      </aside>
    </div>
  </div>
</div>
<div class="flex-1 bg-[#3c3c3c]"></div>

<!-- floating toolbox -->
<div class="absolute left-[16px] top-[87px] w-[40px] h-[654px] bg-[#535353] border-r border-b border-[#3e3e3e] shadow-[2px_2px_6px_rgba(0,0,0,0.15)] flex flex-col items-center text-[#a8a8a8]">
  <div class="w-full h-[14px] bg-[#4b4b4b] flex items-center justify-between px-[9px] text-[#cfcfcf] text-[10px]"><span>››</span><span class="font-bold">✖</span></div>
  <span class="mt-[2px] block w-[19px] h-[4px] bg-[repeating-linear-gradient(90deg,#888_0_1px,transparent_1px_2px)]"></span>
  <svg class="mt-[8px] w-[28px] h-[24px]"><use href="#t-sel"/></svg>
  <svg class="w-[28px] h-[24px]"><use href="#t-dir"/></svg>
  <svg class="w-[28px] h-[24px]"><use href="#t-page"/></svg>
  <svg class="w-[28px] h-[24px]"><use href="#t-gap"/></svg>
  <svg class="w-[28px] h-[24px]"><use href="#t-col"/><use href="#fly"/></svg>
  <div class="mt-[3px] relative w-[28px] h-[22px] rounded-[3px] bg-[#2e2e2e] text-[#cfcfcf] text-[22px] font-['Liberation_Serif'] flex items-center justify-center">T<svg class="absolute inset-0 w-[28px] h-[22px]"><use href="#fly"/></svg></div>
  <svg class="mt-[1px] w-[28px] h-[24px]"><use href="#t-line"/></svg>
  <svg class="w-[28px] h-[24px]"><use href="#t-pen"/><use href="#fly"/></svg>
  <svg class="w-[28px] h-[24px]"><use href="#t-pcl"/><use href="#fly"/></svg>
  <svg class="w-[28px] h-[24px]"><use href="#t-frm"/><use href="#fly"/></svg>
  <svg class="w-[28px] h-[24px]"><use href="#t-rct"/><use href="#fly"/></svg>
  <span class="block w-full border-t border-[#4a4a4a]"></span>
  <svg class="w-[28px] h-[24px]"><use href="#t-sci"/></svg>
  <svg class="mt-[1px] w-[28px] h-[24px]"><use href="#t-fre"/><use href="#fly"/></svg>
  <svg class="w-[28px] h-[24px]"><use href="#t-gra"/></svg>
  <svg class="w-[28px] h-[24px]"><use href="#t-fea"/></svg>
  <span class="mt-[2px] block w-full border-t border-[#4a4a4a]"></span>
  <svg class="w-[28px] h-[24px]"><use href="#t-not"/></svg>
  <svg class="w-[28px] h-[24px]"><use href="#t-eye"/><use href="#fly"/></svg>
  <svg class="w-[28px] h-[24px]"><use href="#t-hnd"/></svg>
  <svg class="w-[28px] h-[24px]"><use href="#t-zom"/></svg>
  <span class="block w-full border-t border-[#4a4a4a]"></span>
  <div class="mt-[2px] h-[20px] w-full flex items-center justify-between px-[5px]">
    <svg class="w-[12px] h-[14px]" viewBox="0 0 12 14"><path d="M1 1h7v8H1z" fill="#eee" stroke="#111"/><path d="M4 5h7v8H4z" fill="#111" stroke="#ddd"/></svg>
    <svg class="w-[12px] h-[14px]" viewBox="0 0 12 14"><path d="M1 4c4-3 8-2 9 6M8 8l2 5 2-4M4 1L1 4l3 3" fill="none" stroke="#aaa" stroke-width="1.400"/></svg>
  </div>
  <div class="relative w-full h-[28px]">
    <span class="absolute left-[14px] top-[9px] w-[18px] h-[18px] bg-[#f3f3f3] overflow-hidden"><svg class="w-[18px] h-[18px]" viewBox="0 0 18 18"><path d="M0 18L18 0" stroke="#cc1d1d" stroke-width="2"/></svg></span>
    <span class="absolute left-[5px] top-0 w-[19px] h-[19px] bg-white text-black text-[21px] font-bold font-['Liberation_Serif'] flex items-center justify-center">T</span>
  </div>
  <div class="mt-[5px] h-[18px] w-full flex items-center pl-[9px] gap-[8px]"><span class="w-[8px] h-[8px] border border-[#777]"></span><span class="w-[14px] h-[14px] rounded-[2px] bg-[#2e2e2e] text-[#bbb] text-[12px] font-bold font-['Liberation_Serif'] flex items-center justify-center">T</span></div>
  <div class="mt-[4px] relative w-[28px] h-[22px] rounded-[3px] bg-[#2e2e2e] flex items-center justify-center"><span class="w-[14px] h-[14px] bg-black border border-[#aaa]"></span><svg class="absolute inset-0 w-[28px] h-[22px]"><use href="#fly"/></svg></div>
  <svg class="mt-[8px] w-[16px] h-[12px]" viewBox="0 0 16 12"><path d="M4 3h12v8H4z" fill="#a8a8a8"/><path d="M0 4h3v2H0zM0 8h3v2H0zM5 0v2M8 0v2M11 0v2M14 0v2" stroke="#a8a8a8"/></svg>
  <span class="mt-[7px] block w-full border-t border-[#4a4a4a]"></span>
  <div class="mt-[6px] relative w-[28px] h-[22px] rounded-[3px] bg-[#2e2e2e] flex items-center justify-center"><svg class="w-[12px] h-[12px]" viewBox="0 0 12 12"><path d="M.500.500h11v11H.500z" fill="#8d8d8d" stroke="#bbb"/><path d="M3 3h2v6H3zM7 3h2v6H7z" fill="#444"/></svg><svg class="absolute inset-0 w-[28px] h-[22px]"><use href="#fly"/></svg></div>
</div>

<!-- Paragraph Styles panel -->
<div class="absolute left-[1384px] top-[382px] w-[241px] h-[199px] flex flex-col bg-[#535353] border-l border-[#666] border-t-4 border-t-[#3a3a3a] shadow-[-2px_2px_8px_rgba(0,0,0,0.25)]">
  <div class="h-[27px] shrink-0 flex bg-[#434343]">
    <div class="w-[118px] bg-[#535353] flex items-center pl-[7px] font-bold text-[#e0e0e0] text-[11.500px] whitespace-nowrap"><svg class="w-[6px] h-[10px] mr-[5px]" viewBox="0 0 6 10"><path d="M1 4l2-3 2 3M1 6l2 3 2-3" fill="none" stroke="#bbb"/></svg>Paragraph Styles</div>
    <div class="ml-auto flex items-center pr-[3px] text-[#c8c8c8]">
      <svg class="w-[12px] h-[10px]" viewBox="0 0 12 10"><path d="M1 1l4 4-4 4M6 1l4 4-4 4" fill="none" stroke="#bbb"/></svg>
      <span class="ml-[6px] w-px h-[12px] bg-[#9a9a9a]"></span>
      <svg class="ml-[6px] w-[11px] h-[9px]" viewBox="0 0 11 9"><path d="M0 1h11M0 3.500h11M0 6h11M0 8.500h11" stroke="#c8c8c8"/></svg>
    </div>
  </div>
  <div class="h-[26px] shrink-0 flex items-center pl-[5px] pr-[9px]">[Basic Paragraph]<span class="ml-auto text-[13px] text-[#b0b0b0]">[a+]</span><svg class="ml-[12px] w-[10px] h-[14px]" viewBox="0 0 10 14"><path d="M8 0L2 7h3L2 14l6-8H5z" fill="#b0b0b0"/></svg></div>
  <div class="h-[20px] shrink-0 flex items-center pl-[35px] bg-[#4c6a8c] font-bold text-[#eaeaea] text-[11.800px]">[Basic Paragraph]</div>
  <div class="flex-1"></div>
  <div class="h-[25px] shrink-0 border-t border-[#4a4a4a] flex items-center pl-[7px] text-[#aaa]">
    <svg class="w-[14px] h-[13px]" viewBox="0 0 14 13"><path d="M3 .500h10v10H8M1 5h5M4 3l2 2-2 2" fill="none" stroke="#aaa"/><path d="M7 2h5v5H7z" fill="#aaa"/></svg>
    <svg class="ml-[59px] w-[14px] h-[12px]" viewBox="0 0 14 12"><path d="M0 0h5l2 2h7v10H0z" fill="#bbb"/><path d="M8 3L6 7h2l-1 4 3-5H8z" fill="#222"/></svg>
    <span class="ml-[14px] w-px h-[24px] bg-[#4c4c4c]"></span>
    <svg class="ml-[10px] w-[14px] h-[12px]" viewBox="0 0 14 12"><path d="M0 0h5l2 2h7v10H0z" fill="#bbb"/></svg>
    <svg class="ml-[14px] w-[16px] h-[12px]" viewBox="4 0 20 20"><use href="#pil" class="text-[#777]"/><path d="M18 8l4 4M22 8l-4 4" stroke="#777"/></svg>
    <svg class="ml-[14px] w-[11px] h-[11px]" viewBox="0 0 11 11"><path d="M.500.500h10v10H.500zM3 5.500h5M5.500 3v5" fill="none" stroke="#aaa"/></svg>
    <svg class="ml-[16px] w-[11px] h-[12px]" viewBox="0 0 11 12"><path d="M0 1.500h11M2 3v8.500h7V3M4 4v7M7 4v7M4 1V0h3v1" fill="none" stroke="#777"/></svg>
  </div>
  <div class="h-[9px] shrink-0 border-t-2 border-[#434343] bg-[#505050] flex justify-center items-center"><span class="block w-[19px] h-[4px] bg-[repeating-linear-gradient(90deg,#888_0_1px,transparent_1px_2px)]"></span></div>
</div>

<!-- dialog -->
<div class="absolute left-[436px] top-[302px] w-[909px] h-[717px] flex flex-col bg-[#535353] shadow-[0_2px_14px_rgba(0,0,0,0.4)] text-[#dedede]">
  <div class="h-[30px] shrink-0 bg-[#aed9ff] flex items-center pl-[8px] text-[#151515] text-[12px]">Paragraph Style Options</div>
  <div class="h-[641px] shrink-0 flex pl-[15px] pt-[15px]">
    <ul class="w-[178px] h-[484px] shrink-0 border border-[#5c8ebc] pt-[0px] text-[10.200px] text-[#dedede]">
      <li class="h-[22px] pl-[4px] flex items-center">General</li>
      <li class="h-[22px] pl-[4px] flex items-center">Basic Character Formats</li>
      <li class="h-[22px] pl-[4px] flex items-center">Advanced Character Formats</li>
      <li class="h-[22px] pl-[4px] flex items-center">Indents and Spacing</li>
      <li class="h-[22px] pl-[4px] flex items-center">Tabs</li>
      <li class="h-[22px] pl-[4px] flex items-center">Paragraph Rules</li>
      <li class="h-[22px] pl-[4px] flex items-center">Paragraph Border</li>
      <li class="h-[22px] pl-[4px] flex items-center">Paragraph Shading</li>
      <li class="h-[22px] pl-[4px] flex items-center">Keep Options</li>
      <li class="h-[22px] pl-[4px] flex items-center">Hyphenation</li>
      <li class="h-[22px] pl-[4px] flex items-center">Justification</li>
      <li class="h-[22px] pl-[4px] flex items-center">Span Columns</li>
      <li class="h-[22px] pl-[4px] flex items-center bg-[#4c6a8c]">Drop Caps and Nested Styles</li>
      <li class="h-[22px] pl-[4px] flex items-center">GREP Style</li>
      <li class="h-[22px] pl-[4px] flex items-center">Bullets and Numbering</li>
      <li class="h-[22px] pl-[4px] flex items-center">Character Color</li>
      <li class="h-[22px] pl-[4px] flex items-center">OpenType Features</li>
      <li class="h-[22px] pl-[4px] flex items-center">Underline Options</li>
      <li class="h-[22px] pl-[4px] flex items-center">Strikethrough Options</li>
      <li class="h-[22px] pl-[4px] flex items-center">Export Tagging</li>
    </ul>
    <div class="ml-[10px] w-[686px] shrink-0 text-[12.800px]">
      <div class="h-[21px] flex items-center"><span class="w-[244px] text-right">Style <u>N</u>ame:</span><span class="ml-[7px] w-[255px] h-[21px] bg-[#5a5a5a] rounded-[2px] flex items-center pl-[5px] text-[#a3a3a3] text-[12.300px]">[Basic Paragraph]</span></div>
      <div class="mt-[6px] h-[16px] flex items-center"><span class="w-[246px] text-right text-[10px]">Location:</span></div>
      <div class="mt-[5px] h-[16px] flex items-center">Drop Caps and Nested Styles</div>
      <div class="mt-[7px] border-t border-[#5b5b5b]"></div>
      <div class="relative mt-[17px] h-[106px] border border-[#4c4c4c] rounded-[2px] pl-[9px] pt-[12px]">
        <span class="absolute left-[9px] top-[-9px] px-[5px] h-[16px] flex items-center bg-[#535353]">Drop Caps</span>
        <div class="h-[16px] flex items-center text-[10px]"><span class="w-[84px]"><u>L</u>ines</span><span class="w-[89px]"><u>C</u>haracters</span><span>Character <u>S</u>tyle</span></div>
        <div class="mt-[6px] h-[21px] flex">
          <div class="w-[74px] flex border border-[#6e6e6e] rounded-[2px] bg-[#444]"><svg class="w-[18px] h-[19px] border-r border-[#6e6e6e]" viewBox="0 0 18 20"><use href="#spin"/></svg><span class="pl-[4px] self-center">0</span></div>
          <div class="ml-[10px] w-[74px] flex border border-[#6e6e6e] rounded-[2px] bg-[#444]"><svg class="w-[18px] h-[19px] border-r border-[#6e6e6e]" viewBox="0 0 18 20"><use href="#spin"/></svg><span class="pl-[4px] self-center">0</span></div>
          <div class="ml-[15px] w-[230px] flex border border-[#6e6e6e] rounded-[2px] bg-[#444]"><span class="flex-1 bg-[#e2e2e2] text-[#222] pl-[8px] flex items-center">[None]</span><svg class="w-[18px] h-[19px]" viewBox="0 0 18 18"><use href="#chev"/></svg></div>
        </div>
        <div class="mt-[10px] h-[20px] flex items-center">
          <span class="ml-[1px] w-[12px] h-[12px] bg-[#c8c8c8] rounded-[2px] flex items-center justify-center"><svg class="w-[9px] h-[9px]" viewBox="0 0 9 9"><path d="M1 4l2.500 3L8 1" fill="none" stroke="#444" stroke-width="1.500"/></svg></span><span class="ml-[7px] w-[154px]">Align Left <u>E</u>dge</span>
          <span class="w-[12px] h-[12px] border border-[#c8c8c8] rounded-[2px]"></span><span class="ml-[7px]">Scale <u>f</u>or Descenders</span>
        </div>
      </div>
      <div class="relative mt-[27px] h-[145px] border border-[#4c4c4c] rounded-[2px] px-[9px] pt-[9px]">
        <span class="absolute left-[9px] top-[-8px] px-[5px] h-[16px] flex items-center bg-[#535353]">Nested Styles</span>
        <div class="h-[89px] border border-[#4c4c4c] pl-[9px] pt-[6px] font-bold text-[11.100px]">Click New Nested Style button to create a nested style.</div>
        <div class="mt-[6px] flex items-center">
          <span class="w-[122px] h-[26px] border border-[#e6e6e6] rounded-full flex items-center justify-center"><span>Ne<u>w</u> Nested Style</span></span>
          <span class="ml-[10px] w-[89px] h-[26px] bg-[#5a5a5a] rounded-full flex items-center justify-center text-[#7e7e7e]"><span><u>D</u>elete</span></span>
          <svg class="ml-auto w-[12px] h-[14px]" viewBox="0 0 12 14"><use href="#up"/></svg>
          <svg class="ml-[18px] mr-[7px] w-[12px] h-[14px]" viewBox="0 0 12 14"><use href="#down"/></svg>
        </div>
      </div>
      <div class="relative mt-[27px] h-[123px] border border-[#4c4c4c] rounded-[2px] px-[9px] pt-[10px]">
        <span class="absolute left-[9px] top-[-8px] px-[5px] h-[16px] flex items-center bg-[#535353]">Nested Line Styles</span>
        <div class="h-[67px] border border-[#4c4c4c] pl-[9px] pt-[6px] font-bold text-[11.100px]">Click New Line Style button to create a line style.</div>
        <div class="mt-[6px] flex items-center">
          <span class="w-[105px] h-[26px] border border-[#e6e6e6] rounded-full flex items-center justify-center"><span>New Li<u>n</u>e Style</span></span>
          <span class="ml-[12px] w-[88px] h-[26px] bg-[#5a5a5a] rounded-full flex items-center justify-center text-[#7e7e7e]"><span>Dele<u>t</u>e</span></span>
          <svg class="ml-auto w-[12px] h-[14px]" viewBox="0 0 12 14"><use href="#up"/></svg>
          <svg class="ml-[18px] mr-[7px] w-[12px] h-[14px]" viewBox="0 0 12 14"><use href="#down"/></svg>
        </div>
      </div>
    </div>
  </div>
  <div class="h-[25px] shrink-0 flex items-center pl-[16px] pr-[15px] text-[12.800px]">
    <span class="mb-[4px] w-[12px] h-[12px] border border-[#c8c8c8] rounded-[2px]"></span><span class="mb-[4px] ml-[6px]"><u>P</u>review</span>
    <span class="ml-auto w-[95px] h-[25px] border-2 border-[#f0f0f0] rounded-full flex items-center justify-center">OK</span>
    <span class="ml-[10px] w-[95px] h-[25px] border border-[#e6e6e6] rounded-full flex items-center justify-center">Cancel</span>
  </div>
</div>
</div>
</body></html>
